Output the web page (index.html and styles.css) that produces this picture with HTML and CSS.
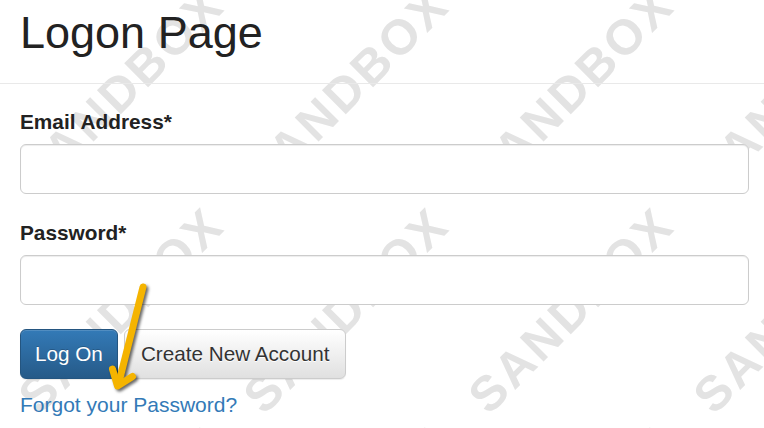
FILE: index.html
```html
<!DOCTYPE html>
<html lang="en">
<head>
<meta charset="utf-8">
<title>Logon Page</title>
<link rel="stylesheet" href="styles.css">
</head>
<body>
<div class="watermark" aria-hidden="true">
  <div class="wm-grid">
    <div class="wm"><span>SANDBOX</span></div>
    <div class="wm"><span>SANDBOX</span></div>
    <div class="wm"><span>SANDBOX</span></div>
    <div class="wm"><span>SANDBOX</span></div>
    <div class="wm"><span>SANDBOX</span></div>
    <div class="wm"><span>SANDBOX</span></div>
    <div class="wm"><span>SANDBOX</span></div>
    <div class="wm"><span>SANDBOX</span></div>
    <div class="wm"><span>SANDBOX</span></div>
    <div class="wm"><span>SANDBOX</span></div>
    <div class="wm"><span>SANDBOX</span></div>
    <div class="wm"><span>SANDBOX</span></div>
    <div class="wm"><span>SANDBOX</span></div>
    <div class="wm"><span>SANDBOX</span></div>
    <div class="wm"><span>SANDBOX</span></div>
  </div>
</div>
<div class="page">
  <header class="page-header">
    <h1>Logon Page</h1>
  </header>
  <main class="content">
    <form class="logon-form">
      <div class="form-group">
        <label for="email">Email Address*</label>
        <input id="email" type="text" class="form-control">
      </div>
      <div class="form-group">
        <label for="password">Password*</label>
        <input id="password" type="password" class="form-control">
      </div>
      <div class="actions">
        <button type="button" class="btn btn-primary">Log On</button>
        <button type="button" class="btn btn-default">Create New Account</button>
      </div>
      <a href="#" class="forgot">Forgot your Password?</a>
    </form>
  </main>
  <svg class="arrow" width="60" height="120" viewBox="100 275 60 120" aria-hidden="true">
    <path d="M143,287 L119,382" fill="none" stroke="#f5b400" stroke-width="7" stroke-linecap="round"/>
    <path d="M112.5,369 L117.5,386 L132.5,376.5" fill="none" stroke="#f5b400" stroke-width="7" stroke-linecap="round" stroke-linejoin="round"/>
  </svg>
</div>
</body>
</html>
```

FILE: styles.css
```css
html, body {
  margin: 0;
  padding: 0;
  background: #fff;
}

body {
  position: relative;
  width: 764px;
  height: 428px;
  overflow: hidden;
  font-family: "Liberation Sans", Arial, sans-serif;
  color: #222;
}

.watermark {
  position: absolute;
  inset: 0;
  overflow: hidden;
  z-index: 0;
  pointer-events: none;
}

.wm-grid {
  display: grid;
  grid-template-columns: repeat(5, 225px);
  grid-auto-rows: 220px;
  margin-left: -216px;
  margin-top: -20px;
}

.wm {
  display: flex;
  align-items: center;
  justify-content: center;
}

.wm span {
  display: block;
  white-space: nowrap;
  font-family: "Liberation Sans", Arial, sans-serif;
  font-weight: bold;
  font-size: 49px;
  letter-spacing: 3px;
  color: #e3e3e3;
  transform: rotate(-45deg);
}

.page {
  position: relative;
  z-index: 1;
}

.page-header {
  padding: 8px 20px 25px;
  border-bottom: 1px solid #e9e9e9;
}

.page-header h1 {
  margin: 0;
  font-size: 45px;
  line-height: 50px;
  font-weight: normal;
  color: #222;
}

.content {
  padding: 27px 15px 0 20px;
}

.form-group {
  display: flex;
  flex-direction: column;
  margin-bottom: 28px;
}

.form-group label {
  font-size: 20.8px;
  line-height: 22px;
  font-weight: bold;
  color: #222;
  margin-bottom: 11px;
}

.form-control {
  box-sizing: border-box;
  height: 50px;
  width: 729px;
  border: 1px solid #ccc;
  border-radius: 6px;
  background: #fff;
  box-shadow: inset 0 1px 1px rgba(0, 0, 0, 0.075);
  font-size: 20px;
  padding: 6px 12px;
  margin: 0;
}

.logon-form .form-group:nth-child(2) {
  margin-bottom: 24px;
}

.actions {
  display: flex;
  gap: 6px;
  margin-bottom: 15px;
}

.btn {
  box-sizing: border-box;
  height: 50px;
  padding: 0 14px;
  border-radius: 6px;
  font-family: "Liberation Sans", Arial, sans-serif;
  font-size: 20.7px;
  line-height: 48px;
  cursor: pointer;
}

.btn-primary {
  color: #fff;
  border: 1px solid #245580;
  background: linear-gradient(to bottom, #337ab7 0%, #265a88 100%);
  text-shadow: 0 -1px 0 rgba(0, 0, 0, 0.2);
  box-shadow: inset 0 1px 0 rgba(255, 255, 255, 0.15), 0 1px 1px rgba(0, 0, 0, 0.075);
}

.btn-default {
  padding: 0 16px;
  color: #333;
  border: 1px solid #ccc;
  background: linear-gradient(to bottom, #ffffff 0%, #e0e0e0 100%);
  text-shadow: 0 1px 0 #fff;
  box-shadow: inset 0 1px 0 rgba(255, 255, 255, 0.15), 0 1px 1px rgba(0, 0, 0, 0.075);
}

.forgot {
  display: block;
  font-size: 21px;
  line-height: 22px;
  color: #337ab7;
  text-decoration: none;
}

.arrow {
  position: absolute;
  left: 100px;
  top: 275px;
  overflow: visible;
  filter: drop-shadow(2px 2px 1.5px rgba(0, 0, 0, 0.6));
}
```
